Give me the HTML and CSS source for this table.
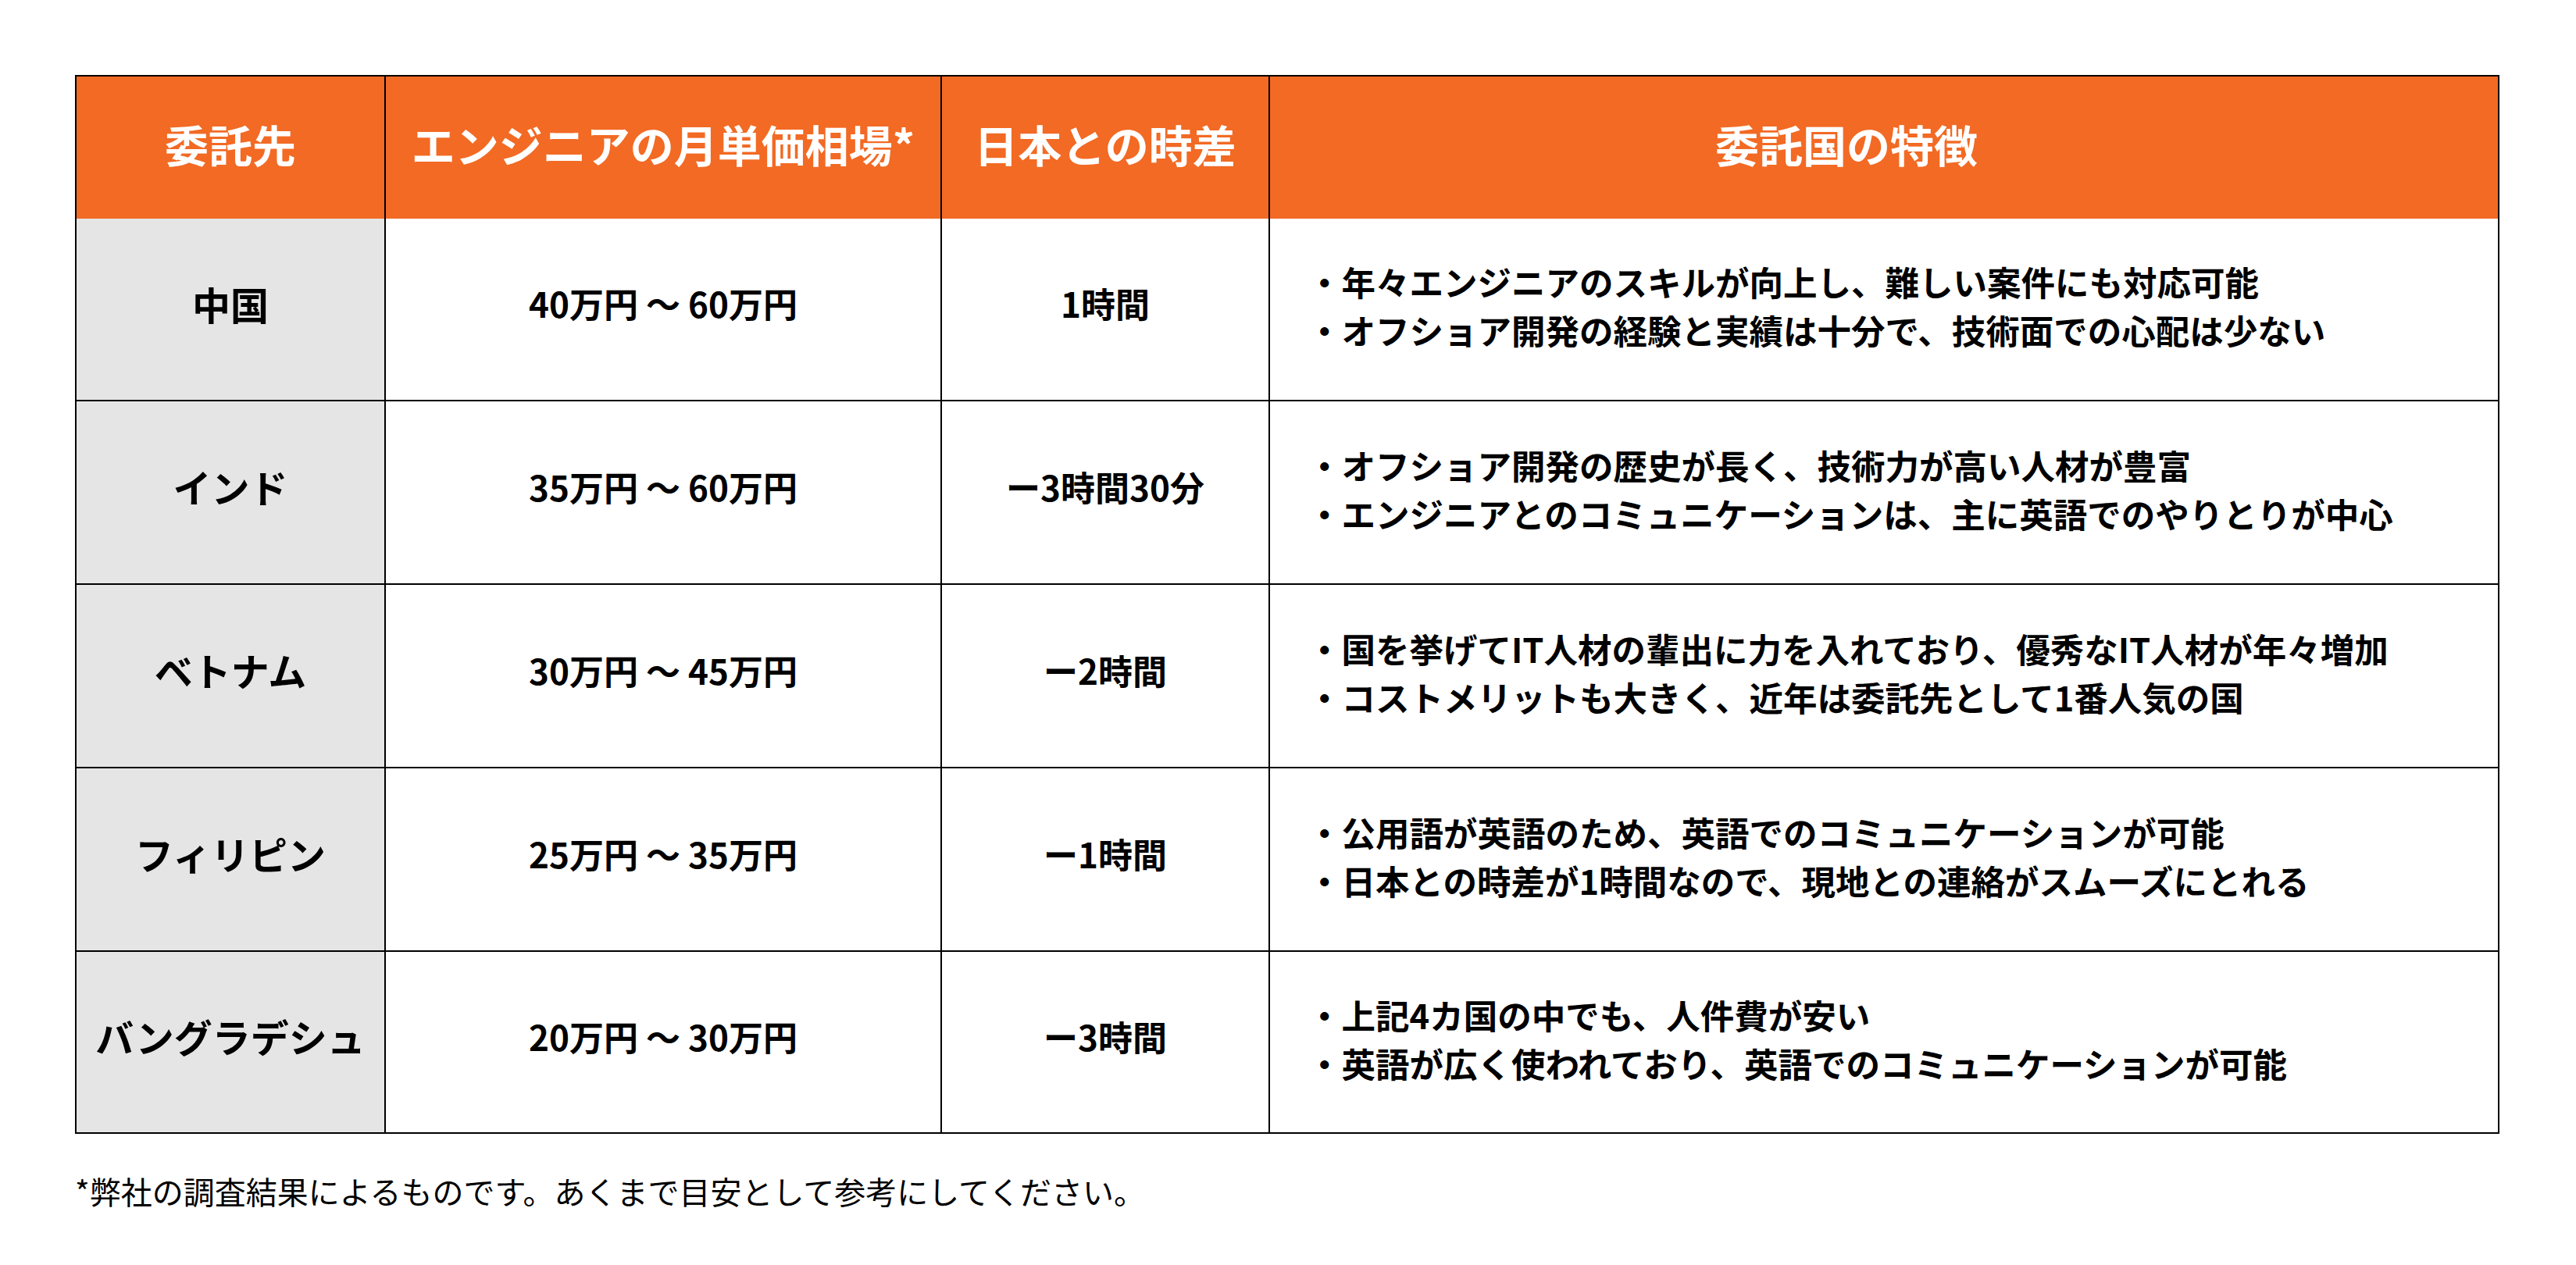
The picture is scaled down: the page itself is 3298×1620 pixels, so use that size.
FILE: index.html
```html
<!DOCTYPE html>
<html lang="ja">
<head>
<meta charset="utf-8">
<title>オフショア開発 委託先比較</title>
<link rel="stylesheet" href="styles.css">
</head>
<body>
<div class="table">
  <div class="head">
    <div class="hcell">委託先</div>
    <div class="hcell">エンジニアの月単価相場*</div>
    <div class="hcell">日本との時差</div>
    <div class="hcell hcell-wide">委託国の特徴</div>
  </div>
  <div class="row">
    <div class="country">中国</div>
    <div class="cell">40万円 〜 60万円</div>
    <div class="cell">1時間</div>
    <div class="feat"><p>・年々エンジニアのスキルが向上し、難しい案件にも対応可能</p><p>・オフショア開発の経験と実績は十分で、技術面での心配は少ない</p></div>
  </div>
  <div class="row">
    <div class="country">インド</div>
    <div class="cell">35万円 〜 60万円</div>
    <div class="cell">ー3時間30分</div>
    <div class="feat"><p>・オフショア開発の歴史が長く、技術力が高い人材が豊富</p><p>・エンジニアとのコミュニケーションは、主に英語でのやりとりが中心</p></div>
  </div>
  <div class="row">
    <div class="country">ベトナム</div>
    <div class="cell">30万円 〜 45万円</div>
    <div class="cell">ー2時間</div>
    <div class="feat"><p>・国を挙げてIT人材の輩出に力を入れており、優秀なIT人材が年々増加</p><p>・コストメリットも大きく、近年は委託先として1番人気の国</p></div>
  </div>
  <div class="row">
    <div class="country">フィリピン</div>
    <div class="cell">25万円 〜 35万円</div>
    <div class="cell">ー1時間</div>
    <div class="feat"><p>・公用語が英語のため、英語でのコミュニケーションが可能</p><p>・日本との時差が1時間なので、現地との連絡がスムーズにとれる</p></div>
  </div>
  <div class="row">
    <div class="country">バングラデシュ</div>
    <div class="cell">20万円 〜 30万円</div>
    <div class="cell">ー3時間</div>
    <div class="feat"><p>・上記4カ国の中でも、人件費が安い</p><p>・英語が広く使われており、英語でのコミュニケーションが可能</p></div>
  </div>
</div>
<p class="note">*弊社の調査結果によるものです。あくまで目安として参考にしてください。</p>
</body>
</html>
```

FILE: styles.css
```css
html, body {
  margin: 0;
  background: #ffffff;
}
body {
  padding: 96px;
  font-family: "Noto Sans CJK JP", "Noto Sans", sans-serif;
  color: #000000;
}
.table {
  width: 3104px;
  box-sizing: border-box;
  border: 2px solid #000000;
  background: #000000;
  display: flex;
  flex-direction: column;
}
.head, .row {
  display: grid;
  grid-template-columns: 394px 710px 418px 1572px;
  column-gap: 2px;
  background: #000000;
}
.head {
  height: 182px;
}
.row {
  height: 233px;
}
.head + .row {
  height: 232px;
}
.row:last-child {
  height: 231px;
}
.row + .row {
  margin-top: 2px;
}
.hcell {
  background: #f26a24;
  color: #ffffff;
  font-weight: 700;
  font-size: 56px;
  display: flex;
  align-items: center;
  justify-content: center;
  padding-bottom: 12px;
  box-sizing: border-box;
}
.hcell-wide {
  padding-right: 96px;
}
.country {
  background: #e5e5e5;
  font-weight: 700;
  font-size: 49px;
  display: flex;
  align-items: center;
  justify-content: center;
  padding-bottom: 16px;
  box-sizing: border-box;
}
.cell {
  background: #ffffff;
  font-weight: 700;
  font-size: 44px;
  display: flex;
  align-items: center;
  justify-content: center;
  white-space: pre;
  padding-bottom: 16px;
  box-sizing: border-box;
}
.feat {
  background: #ffffff;
  font-weight: 700;
  font-size: 43.5px;
  line-height: 62px;
  display: flex;
  flex-direction: column;
  justify-content: center;
  padding: 0 0 8px 48px;
  box-sizing: border-box;
}
.feat p {
  margin: 0;
  white-space: nowrap;
}
.note {
  margin: 44px 0 0 0;
  font-size: 40px;
  line-height: 58px;
}
```
